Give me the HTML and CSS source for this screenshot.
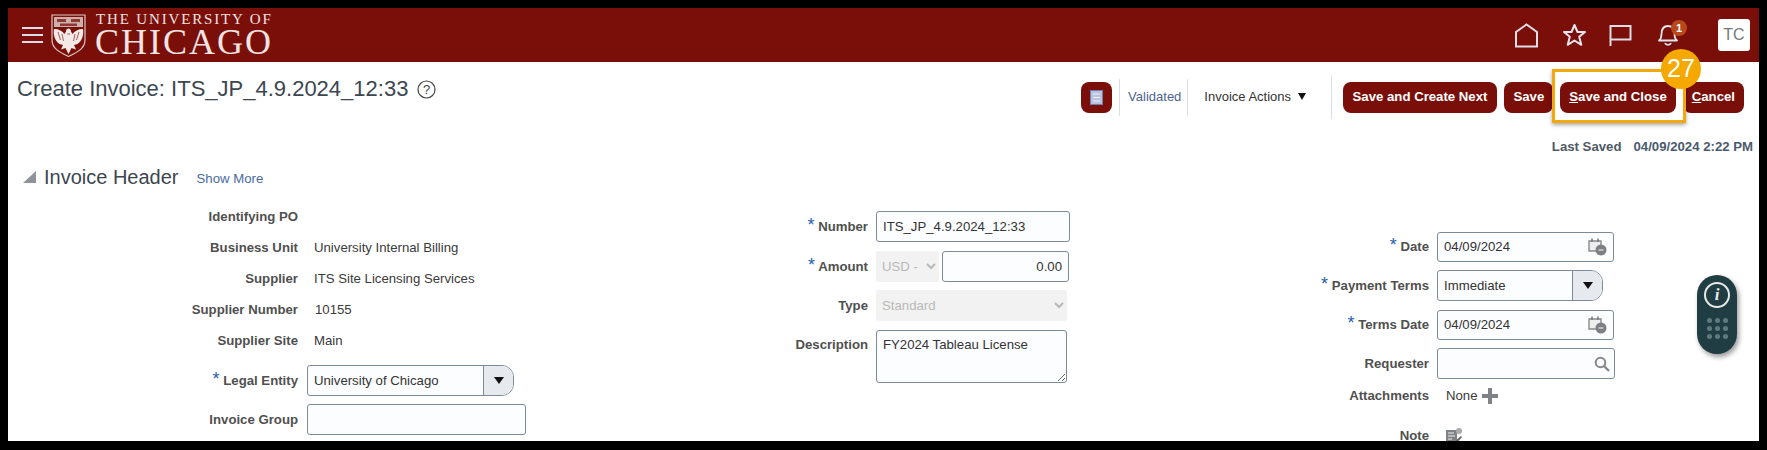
FILE: index.html
```html
<!DOCTYPE html>
<html lang="en">
<head>
    <meta charset="UTF-8">
    <title>Create Invoice</title>
    <link rel="stylesheet" href="styles.css">
</head>
<body>
    <div class="app">
        <header class="topbar">
            <div class="burger"><span></span><span></span><span></span></div>
            <svg class="crest" width="35" height="43" viewBox="0 0 35 43">
                <path d="M1 1H34V26C34 35 25 39 17.500 42.500C10 39 1 35 1 26Z" fill="#7a0f0a" stroke="#dcc8c4" stroke-width="1.200"/>
                <path d="M3 3H32V13H3Z" fill="#cdb0ac"/>
                <path d="M6 5H15V8H6ZM20 5H29V8H20ZM9 9.500H26V12H9Z" fill="#8e3a34"/>
                <path d="M17.500 14.500C19 14.500 20 15.500 20 17.500L21.500 20C23.500 17 27 15 32 15C33 21 31 27 26.500 30L23 31L25 35.500L20.500 34L17.500 40L14.500 34L10 35.500L12 31L8.500 30C4 27 2 21 3 15C8 15 11.500 17 13.500 20L15 17.500C15 15.500 16 14.500 17.500 14.500Z" fill="#f3e9e6"/>
                <path d="M7 18L9.500 26M11 20L12.500 27M28 18L25.500 26M24 20L22.500 27M16 20H19" stroke="#a8605a" stroke-width="1"/>
            </svg>
            <div class="brand">
                <div class="brand-top">THE UNIVERSITY OF</div>
                <div class="brand-name">CHICAGO</div>
            </div>
            <div class="top-icons">
                <svg class="ico-home" width="25" height="25" viewBox="0 0 25 25"><path d="M2 23.500V9L12.500 1.500L23 9V23.500Z" fill="none" stroke="#dcdde6" stroke-width="2"/></svg>
                <svg class="ico-star" width="25" height="24" viewBox="0 0 25 24"><path d="M12.500 2L15.500 9H23L17.200 13.800L19.300 21.800L12.500 17.500L5.700 21.800L7.800 13.800L2 9H9.500Z" fill="none" stroke="#e4e5ec" stroke-width="2" stroke-linejoin="round"/></svg>
                <svg class="ico-flag" width="23" height="21" viewBox="0 0 23 21"><path d="M1.500 21V1H21.500V14.500H1.500" fill="none" stroke="#dcdde6" stroke-width="2"/></svg>
                <div class="bell">
                    <svg width="20" height="22" viewBox="0 0 20 22"><path d="M1 16.500C3 15 3.500 13 3.500 10C3.500 5 6 2 10 2C14 2 16.500 5 16.500 10C16.500 13 17 15 19 16.500Z" fill="none" stroke="#e4e5ec" stroke-width="1.800" stroke-linejoin="round"/><path d="M7 19C8 21.500 12 21.500 13 19" fill="none" stroke="#e4e5ec" stroke-width="1.800"/></svg>
                    <span class="bell-count">1</span>
                </div>
                <div class="avatar">TC</div>
            </div>
        </header>

        <div class="page-head">
            <div class="page-title">
                Create Invoice: ITS_JP_4.9.2024_12:33
                <svg width="19" height="19" viewBox="0 0 19 19"><circle cx="9.500" cy="9.500" r="8.500" fill="none" stroke="#444" stroke-width="1.200"/><text x="9.500" y="14" text-anchor="middle" class="help-mark">?</text></svg>
            </div>
            <div class="toolbar">
                <button class="btn btn-icon">
                    <svg width="13" height="15" viewBox="0 0 13 15"><rect x="0.500" y="0.500" width="12" height="14" fill="#b9c3de" stroke="#6f7fb0"/><path d="M3 4H10M3 7.500H10M3 11H10" stroke="#eef0f7" stroke-width="1.200"/></svg>
                </button>
                <span class="sep sep-short sep-first"></span>
                <span class="status">Validated</span>
                <span class="sep sep-short sep-mid"></span>
                <span class="actions">Invoice Actions <i class="caret"></i></span>
                <span class="sep sep-last"></span>
                <button class="btn btn-next">Save and Create Next</button>
                <button class="btn">Save</button>
                <button class="btn btn-close"><u>S</u>ave and Close</button>
                <button class="btn"><u>C</u>ancel</button>
            </div>
        </div>

        <div class="last-saved"><b>Last Saved</b><span>04/09/2024 2:22 PM</span></div>

        <div class="section-head">
            <i class="disclosure"></i>
            <h2>Invoice Header</h2>
            <a class="show-more">Show More</a>
        </div>

        <div class="form">
            <div class="col col-left">
                <div class="row"><label>Identifying PO</label></div>
                <div class="row"><label>Business Unit</label><span class="value">University Internal Billing</span></div>
                <div class="row"><label>Supplier</label><span class="value">ITS Site Licensing Services</span></div>
                <div class="row"><label>Supplier Number</label><span class="value num">10155</span></div>
                <div class="row"><label>Supplier Site</label><span class="value">Main</span></div>
                <div class="row ctrl first-ctrl">
                    <label><em>*</em> Legal Entity</label>
                    <div class="combo combo-legal"><input type="text" value="University of Chicago"><span class="combo-btn"><i class="caret"></i></span></div>
                </div>
                <div class="row ctrl">
                    <label>Invoice Group</label>
                    <input class="text group-input" type="text">
                </div>
            </div>

            <div class="col col-mid">
                <div class="row ctrl">
                    <label><em>*</em> Number</label>
                    <input class="text number-input" type="text" value="ITS_JP_4.9.2024_12:33">
                </div>
                <div class="row ctrl">
                    <label><em>*</em> Amount</label>
                    <select class="picker currency" disabled><option>USD -</option></select>
                    <input class="text amount-input" type="text" value="0.00">
                </div>
                <div class="row ctrl">
                    <label>Type</label>
                    <select class="picker type-select" disabled><option>Standard</option></select>
                </div>
                <div class="row ctrl area-row">
                    <label>Description</label>
                    <textarea class="text desc">FY2024 Tableau License</textarea>
                </div>
            </div>

            <div class="col col-right">
                <div class="row ctrl">
                    <label><em>*</em> Date</label>
                    <div class="field date-field">
                        <input type="text" value="04/09/2024">
                        <svg width="19" height="18" viewBox="0 0 19 18"><path d="M1 3H13V13H1Z" fill="#eee" stroke="#8a8a8a" stroke-width="1.400"/><path d="M4 0.500V4M10 0.500V4" stroke="#777" stroke-width="1.500"/><circle cx="13" cy="12" r="5.500" fill="#7c7f84"/><path d="M10.500 12H15.500" stroke="#e5e5e5" stroke-width="1.200"/></svg>
                    </div>
                </div>
                <div class="row ctrl">
                    <label><em>*</em> Payment Terms</label>
                    <div class="combo combo-terms"><input type="text" value="Immediate"><span class="combo-btn"><i class="caret"></i></span></div>
                </div>
                <div class="row ctrl">
                    <label><em>*</em> Terms Date</label>
                    <div class="field date-field">
                        <input type="text" value="04/09/2024">
                        <svg width="19" height="18" viewBox="0 0 19 18"><path d="M1 3H13V13H1Z" fill="#eee" stroke="#8a8a8a" stroke-width="1.400"/><path d="M4 0.500V4M10 0.500V4" stroke="#777" stroke-width="1.500"/><circle cx="13" cy="12" r="5.500" fill="#7c7f84"/><path d="M10.500 12H15.500" stroke="#e5e5e5" stroke-width="1.200"/></svg>
                    </div>
                </div>
                <div class="row ctrl">
                    <label>Requester</label>
                    <div class="field requester-field">
                        <input type="text">
                        <svg width="16" height="16" viewBox="0 0 16 16"><circle cx="6.500" cy="6.500" r="4.800" fill="none" stroke="#85888c" stroke-width="2"/><path d="M10 10L15 15" stroke="#85888c" stroke-width="2.400"/></svg>
                    </div>
                </div>
                <div class="row attach-row">
                    <label>Attachments</label>
                    <span class="value none">None</span>
                    <svg width="16" height="16" viewBox="0 0 16 16"><path d="M6 0H10V6H16V10H10V16H6V10H0V6H6Z" fill="#7f8387"/></svg>
                </div>
                <div class="row note-row">
                    <label>Note</label>
                    <svg class="note-icon" width="17" height="18" viewBox="0 0 17 18"><path d="M0 3H11V17H0Z" fill="#7f8387"/><path d="M2 6H8M2 9H9M2 12H6" stroke="#eee" stroke-width="1.200"/><circle cx="13" cy="4" r="3" fill="#aaa"/><path d="M8 15L15 9L16 10L10 17Z" fill="#666"/></svg>
                </div>
            </div>
        </div>

        <!-- screenshot annotation -->
        <div class="callout-box"></div>
        <div class="callout-num">27</div>

        <div class="float-help">
            <div class="float-info">i</div>
            <div class="float-dots">
                <span></span><span></span><span></span>
                <span></span><span></span><span></span>
                <span></span><span></span><span></span>
            </div>
        </div>
    </div>
</body>
</html>
```

FILE: styles.css
```css
* {
    box-sizing: border-box;
}
body {
    margin: 0;
    padding: 8px;
    height: 450px;
    overflow: hidden;
    background: #000000;
    font-family: "Liberation Sans", Arial, sans-serif;
    color: #333333;
}
.app {
    position: relative;
    height: 433px;
    overflow: hidden;
    background: #ffffff;
}

/* top bar */
.topbar {
    display: flex;
    align-items: center;
    height: 54px;
    padding-left: 14px;
    background: #7a0f0a;
}
.burger {
    display: flex;
    flex-direction: column;
    gap: 5px;
    width: 21px;
    margin-right: 8px;
}
.burger span {
    height: 2px;
    background: #dcdde6;
}
.crest {
    margin-top: 1px;
    margin-right: 9px;
}
.brand {
    font-family: "Liberation Serif", "Times New Roman", serif;
    color: #f0e4e2;
}
.brand-top {
    font-size: 15px;
    line-height: 15px;
    letter-spacing: 1.85px;
    margin-left: 1px;
}
.brand-name {
    font-size: 36px;
    line-height: 31px;
    letter-spacing: 2px;
}
.top-icons {
    display: flex;
    align-items: center;
    margin-left: auto;
    padding-right: 9px;
}
.ico-home {
    margin-right: 23px;
}
.ico-star {
    margin-right: 22px;
}
.ico-flag {
    margin-right: 26px;
}
.bell {
    position: relative;
    display: flex;
    margin-right: 40px;
}
.bell-count {
    position: absolute;
    top: -4px;
    left: 13px;
    width: 16px;
    height: 16px;
    border-radius: 50%;
    background: #b8481c;
    color: #ffffff;
    font-size: 11px;
    font-weight: bold;
    line-height: 16px;
    text-align: center;
}
.avatar {
    width: 32px;
    height: 32px;
    border-radius: 3px;
    background: #ffffff;
    color: #777777;
    font-size: 16px;
    line-height: 32px;
    text-align: center;
}

/* title and buttons */
.page-head {
    display: flex;
    justify-content: space-between;
    height: 44px;
    margin-top: 13px;
    padding-left: 9px;
    padding-right: 15px;
}
.page-title {
    display: flex;
    align-items: center;
    gap: 9px;
    height: 28px;
    font-size: 22px;
    color: #3c4650;
}
.help-mark {
    font-family: "Liberation Sans", Arial, sans-serif;
    font-size: 13px;
    fill: #444444;
}
.toolbar {
    display: flex;
    align-items: center;
}
.btn {
    height: 31px;
    margin-left: 7px;
    padding: 0 9px 1px;
    border: none;
    border-radius: 8px;
    background: #7a0f0a;
    color: #ffffff;
    font-family: inherit;
    font-size: 13.200px;
    font-weight: bold;
}
.btn-next {
    padding: 0 10px 1px;
}
.btn-icon {
    display: flex;
    align-items: center;
    justify-content: center;
    width: 31px;
    padding: 0;
    margin-left: 0;
}
.sep {
    align-self: stretch;
    width: 1px;
    background: #d6dfe8;
    margin: 0 4px 0 24.500px;
}
.sep-short {
    align-self: center;
    height: 37px;
    margin: 0 8px;
}
.sep-first {
    margin-left: 7.500px;
}
.sep-mid {
    margin-left: 6px;
}
.status {
    padding-bottom: 2px;
    font-size: 13px;
    color: #4a6491;
}
.actions {
    display: flex;
    align-items: center;
    gap: 7px;
    margin-left: 8px;
    padding-bottom: 2px;
    font-size: 13px;
    color: #333333;
}
.caret {
    display: inline-block;
    border-left: 4.500px solid transparent;
    border-right: 4.500px solid transparent;
    border-top: 7px solid #111111;
}
.combo-btn .caret {
    border-left-width: 5px;
    border-right-width: 5px;
}
.btn-close {
    margin-left: 7px;
    padding: 0 9px 1px;
}

.last-saved {
    display: flex;
    justify-content: flex-end;
    gap: 12px;
    height: 18px;
    margin-top: 19px;
    padding-right: 6px;
    font-size: 13.200px;
    line-height: 18px;
    font-weight: bold;
    color: #505a64;
}
.last-saved span {
    color: #4a5a70;
}

.section-head {
    display: flex;
    align-items: center;
    height: 24px;
    margin-top: 9px;
    padding-left: 15px;
}
.disclosure {
    width: 0;
    height: 0;
    border-left: 13px solid transparent;
    border-bottom: 12px solid #8e9499;
    margin-right: 8px;
}
.section-head h2 {
    margin: 0;
    font-size: 20px;
    font-weight: normal;
    color: #3c4650;
}
.show-more {
    margin-left: 18px;
    margin-top: 3px;
    font-size: 13.200px;
    color: #4a6aa0;
}

/* form columns */
.form {
    display: grid;
    grid-template-columns: 660px 561px 1fr;
    margin-top: 12px;
    font-size: 13.200px;
}
.col-mid {
    padding-top: 10px;
}
.col-right {
    padding-top: 30px;
}
.row {
    display: flex;
    align-items: center;
    height: 31px;
}
.row label {
    flex: none;
    width: 200px;
    margin-right: 8px;
    text-align: right;
    font-weight: bold;
    color: #505050;
}
.col-left label {
    width: 290px;
    margin-right: 9px;
}
.row label em {
    font-style: normal;
    font-size: 18px;
    font-weight: normal;
    line-height: 10px;
    color: #2a5db0;
}
.value {
    margin-left: 7px;
    color: #3a3a3a;
}
.num {
    margin-left: 8px;
}
.first-ctrl {
    margin-top: 9px;
}
.ctrl {
    margin-bottom: 8px;
}
.col-mid .ctrl {
    margin-bottom: 8.500px;
}
.col-right .ctrl {
    margin-bottom: 8px;
}
.text,
.field,
.combo {
    height: 31px;
    border: 1px solid #7b8b9a;
    border-radius: 3px;
    background: #fcfdff;
    font-family: inherit;
    font-size: 13.200px;
    color: #333333;
}
.text {
    padding: 0 6px;
}
.text:focus,
.field input:focus,
.combo input:focus {
    outline: none;
}
.group-input {
    width: 219px;
}
.number-input {
    width: 194px;
}
.currency {
    width: 63px;
    margin-right: 3px;
}
.amount-input {
    width: 127px;
    text-align: right;
}
.picker {
    height: 31px;
    padding-left: 2px;
    border: none;
    border-radius: 2px;
    background-color: #f2f2f2;
    color: #b8b8b8;
    opacity: 1;
    font-family: inherit;
    font-size: 13.200px;
}
.type-select {
    width: 191px;
}
.area-row {
    height: 53px;
    align-items: flex-start;
}
.area-row label {
    padding-top: 7px;
}
.desc {
    width: 191px;
    height: 53px;
    padding-top: 6px;
    resize: both;
}
.field,
.combo {
    display: flex;
    align-items: center;
}
.field input,
.combo input {
    flex: 1;
    min-width: 0;
    height: 100%;
    padding: 0 6px;
    border: none;
    background: transparent;
    font: inherit;
    color: inherit;
}
.date-field {
    width: 177px;
    height: 30px;
    padding-right: 6px;
}
.requester-field {
    width: 178px;
    padding-right: 4px;
}
.combo {
    border-radius: 3px 12px 12px 3px;
}
.combo-btn {
    display: flex;
    align-items: center;
    justify-content: center;
    width: 30px;
    height: 100%;
    border-left: 1px solid #7b8b9a;
    border-radius: 0 11px 11px 0;
    background: #e6eaee;
}
.combo-legal {
    width: 207px;
}
.combo-terms {
    width: 166px;
}
.attach-row {
    height: 31px;
    margin-top: -7px;
}
.attach-row .none {
    margin-left: 9px;
    margin-right: 4px;
}
.note-row {
    margin-top: 9px;
}
.note-icon {
    margin-left: 9px;
}

/* numbered marker drawn on top of the screenshot */
.callout-box {
    position: absolute;
    left: 1544px;
    top: 61px;
    width: 134px;
    height: 54px;
    border: 3px solid #f4a80f;
    box-shadow: 0 2px 4px rgba(0, 0, 0, 0.35);
}
.callout-num {
    position: absolute;
    left: 1653px;
    top: 41px;
    width: 40px;
    height: 40px;
    border-radius: 50%;
    background: #f5a800;
    color: #ffffff;
    font-size: 25px;
    line-height: 38px;
    text-align: center;
}

/* floating help pill */
.float-help {
    position: absolute;
    left: 1689px;
    top: 267px;
    width: 40px;
    height: 79px;
    padding-top: 7px;
    border-radius: 20px;
    background: #1f3d42;
    box-shadow: 2px 3px 5px rgba(0, 0, 0, 0.4);
}
.float-info {
    width: 26px;
    height: 26px;
    margin: 0 auto;
    border: 2px solid #e8eaea;
    border-radius: 50%;
    color: #e8eaea;
    font-family: "Liberation Serif", serif;
    font-size: 17px;
    font-style: italic;
    font-weight: bold;
    line-height: 22px;
    text-align: center;
}
.float-dots {
    display: grid;
    grid-template-columns: repeat(3, 5px);
    gap: 3px;
    justify-content: center;
    margin-top: 10px;
}
.float-dots span {
    height: 5px;
    border-radius: 50%;
    background: #5f7a7d;
}
```
